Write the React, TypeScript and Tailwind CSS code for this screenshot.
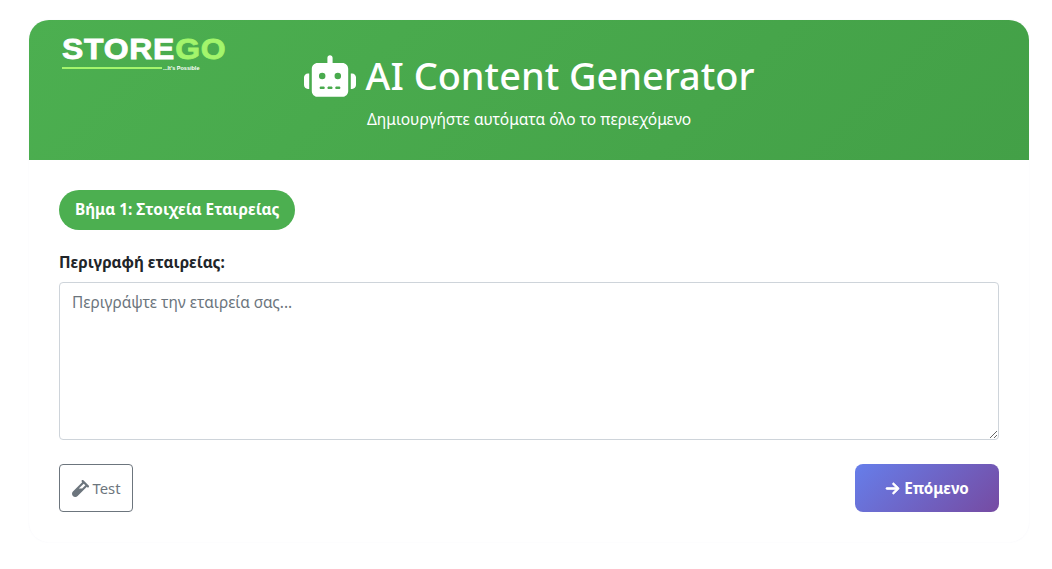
import { FaRobot, FaVial, FaArrowRight } from "react-icons/fa6";

// Logo sits on top of the header banner, top left
function Logo() {
  return (
    <div className="absolute left-[33px] top-[18px] w-[175px] font-['Liberation_Sans',sans-serif]">
      <div className="flex h-[22px] origin-left scale-x-[1.1] items-center text-[29px] leading-[22px] font-bold tracking-[0.7px] [-webkit-text-stroke:0.8px]">
        <span className="text-white">STORE</span>
        <span className="text-[#a3f56c]">GO</span>
      </div>
      <div className="mt-[5px] flex items-center">
        <div className="h-[2px] w-[100px] bg-[#a3f56c]" />
        <span className="ml-[1px] text-[5.5px] leading-[6px] font-bold text-white">...It's Possible</span>
      </div>
    </div>
  );
}

export default function App() {
  return (
    <div className="min-h-[569px] bg-white pt-[20px] pl-[29px] pr-[23px] font-['Noto_Sans',sans-serif]">
      <div className="w-[1000px] rounded-[20px] bg-white shadow-[0_0_2px_rgba(120,120,190,0.07)]">
        <div className="relative flex h-[140px] flex-col items-center rounded-t-[20px] bg-[linear-gradient(135deg,#4caf50,#43a047)] pt-[26px] text-white">
          <Logo />
          <h1 className="flex h-[60px] items-center gap-[10px] text-[37.9px] leading-none font-medium">
            <FaRobot className="text-[52px]" />
            AI Content Generator
          </h1>
          <p className="mt-[1px] text-[15.5px] leading-[24px]">Δημιουργήστε αυτόματα όλο το περιεχόμενο</p>
        </div>

        <div className="px-[30px] pt-[30px] pb-[30px]">
          <div className="inline-flex h-[40px] items-center rounded-[20px] bg-[#4caf50] px-[16px] text-[15.35px] font-bold text-white">
            Βήμα 1: Στοιχεία Εταιρείας
          </div>

          <label className="mt-[22px] mb-[10px] block text-[15.3px] leading-[20px] font-bold text-[#212529]">
            Περιγραφή εταιρείας:
          </label>
          <textarea
            placeholder="Περιγράψτε την εταιρεία σας..."
            className="block h-[158px] w-full rounded-[4px] border border-[#ced4da] bg-white px-[12px] py-[8px] text-[15.4px] leading-[24px] text-[#212529] outline-none placeholder:text-[#6c757d]"
          />

          <div className="mt-[24px] flex items-center justify-between">
            <button className="flex h-[48px] w-[74px] items-center justify-center gap-[4px] rounded-[4px] border border-[#6c757d] pt-[1px] text-[14.8px] text-[#6c757d]">
              <FaVial className="text-[17px]" />
              Test
            </button>
            <button className="flex h-[48px] w-[144px] items-center justify-center gap-[4px] rounded-[8px] bg-[linear-gradient(135deg,#667eea,#764ba2)] text-[15.2px] font-bold text-white">
              <FaArrowRight className="stroke-current stroke-[24] text-[15px]" />
              Επόμενο
            </button>
          </div>
        </div>
      </div>
    </div>
  );
}
